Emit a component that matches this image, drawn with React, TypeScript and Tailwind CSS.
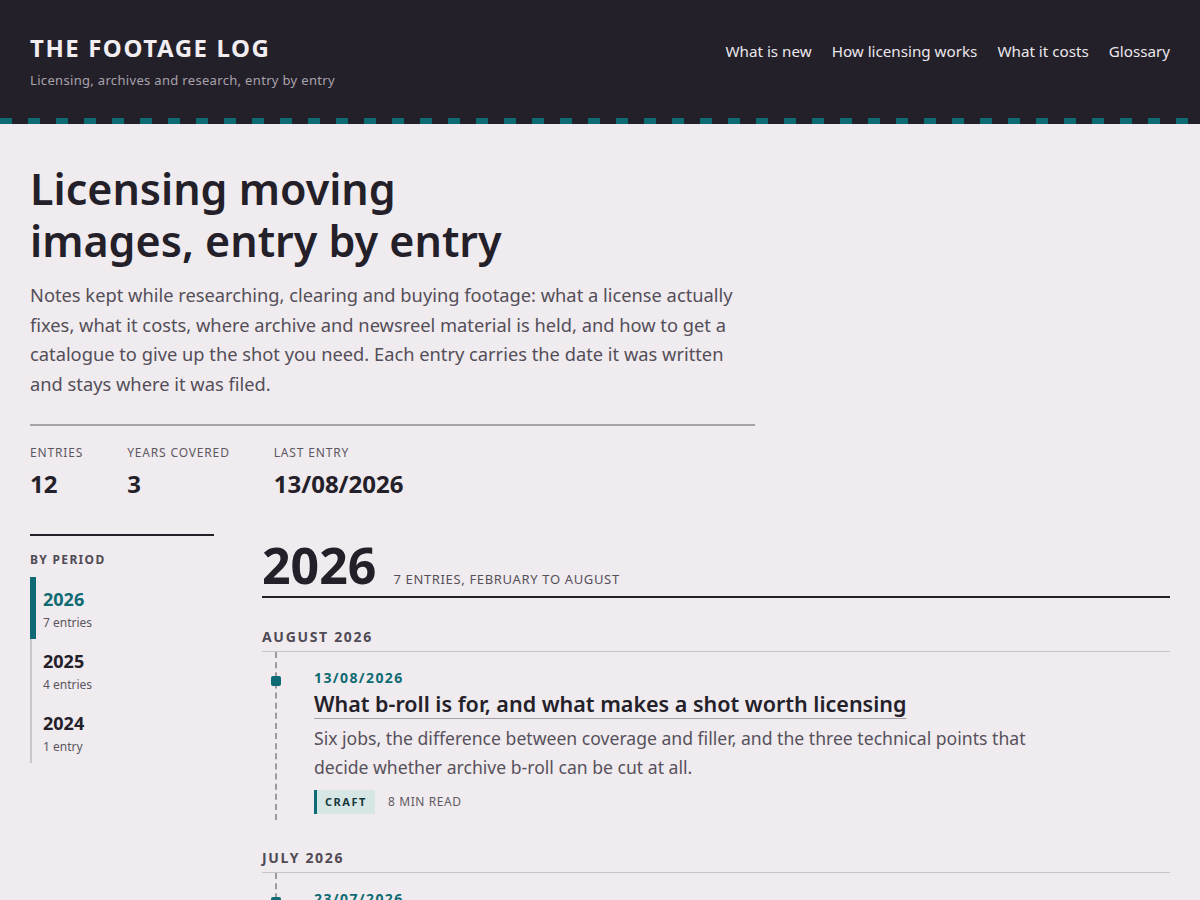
import React from "react";

const font = { fontFamily: '"Noto Sans", "Open Sans", sans-serif' };

const navLinks = ["What is new", "How licensing works", "What it costs", "Glossary"];

const stats = [
  { label: "Entries", value: "12" },
  { label: "Years covered", value: "3" },
  { label: "Last entry", value: "13/08/2026" },
];

const periods = [
  { year: "2026", count: "7 entries", active: true },
  { year: "2025", count: "4 entries", active: false },
  { year: "2024", count: "1 entry", active: false },
];

function Header() {
  return (
    <header className="bg-[#242029]">
      <div className="flex items-start justify-between px-[30px] pt-[32px] pb-[28px]">
        <div>
          <div className="text-[24px] leading-[32px] font-bold tracking-[0.065em] text-[#f1edf1]">
            THE FOOTAGE LOG
          </div>
          <div className="mt-[6px] text-[13px] leading-[20px] tracking-[0.025em] text-[#a8a2ac]">
            Licensing, archives and research, entry by entry
          </div>
        </div>
        <nav className="flex gap-[20px] pt-[8px] text-[15.2px] leading-[22px] text-[#ebe7ec]">
          {navLinks.map((l) => (
            <a key={l} href="#">
              {l}
            </a>
          ))}
        </nav>
      </div>
      <div className="h-[6px] bg-[repeating-linear-gradient(90deg,#0f6b73_0px,#0f6b73_12px,#242029_12px,#242029_28px)]" />
    </header>
  );
}

function Hero() {
  return (
    <section className="w-[725px]">
      <h1 className="max-w-[500px] text-[43px] leading-[52px] font-semibold text-[#242029]">
        Licensing moving images, entry by entry
      </h1>
      <p className="mt-[13px] text-[18.3px] leading-[29.5px] text-[#544e59]">
        Notes kept while researching, clearing and buying footage: what a license actually fixes,
        what it costs, where archive and newsreel material is held, and how to get a catalogue to
        give up the shot you need. Each entry carries the date it was written and stays where it
        was filed.
      </p>
      <div className="mt-[26px] h-[2px] bg-[#a7a2aa]" />
      <dl className="mt-[19px] flex gap-[44px]">
        {stats.map((s) => (
          <div key={s.label}>
            <dt className="text-[12px] leading-[16px] uppercase tracking-[0.07em] text-[#5d5862]">
              {s.label}
            </dt>
            <dd className="mt-[7px] text-[24px] leading-[32px] font-bold text-[#242029]">
              {s.value}
            </dd>
          </div>
        ))}
      </dl>
    </section>
  );
}

function Sidebar() {
  return (
    <aside className="w-[184px] shrink-0 border-t-2 border-[#242029] pt-[16px]">
      <div className="text-[12px] leading-[16px] font-bold uppercase tracking-[0.11em] text-[#4f4a55]">
        By period
      </div>
      <ul className="mt-[9px] border-l-2 border-[#c9c5cb]">
        {periods.map((p) =>
          p.active ? (
            <li
              key={p.year}
              className="-ml-[2px] h-[62px] border-l-[6px] border-[#0f6b73] pl-[7px] pt-[10px]"
            >
              <div className="text-[18px] leading-[24px] font-bold text-[#0f6b73]">{p.year}</div>
              <div className="mt-[4px] text-[12px] leading-[16px] text-[#5b5660]">{p.count}</div>
            </li>
          ) : (
            <li key={p.year} className="h-[62px] pl-[11px] pt-[10px]">
              <div className="text-[18px] leading-[24px] font-bold text-[#242029]">{p.year}</div>
              <div className="mt-[4px] text-[12px] leading-[16px] text-[#5b5660]">{p.count}</div>
            </li>
          )
        )}
      </ul>
    </aside>
  );
}

function MonthHeading({ children }: { children: React.ReactNode }) {
  return (
    <h3 className="border-b border-[#c6c2c8] pb-[4px] text-[14px] leading-[20px] font-bold uppercase tracking-[0.12em] text-[#4f4a55]">
      {children}
    </h3>
  );
}

function Entry({
  date,
  title,
  summary,
  tag,
  read,
}: {
  date: string;
  title: string;
  summary: string;
  tag: string;
  read: string;
}) {
  return (
    <article className="relative ml-[13px] border-l-2 border-dashed border-[#9d98a2] pl-[37px] pt-[16px] pb-[6px]">
      <span className="absolute left-[-6px] top-[24px] h-[10px] w-[10px] rounded-[2px] bg-[#0f6b73]" />
      <div className="text-[14px] leading-[20px] font-bold tracking-[0.1em] text-[#0f6b73]">
        {date}
      </div>
      <h4 className="mt-[1px] text-[21.5px] leading-[30px] font-semibold text-[#242029]">
        <a
          href="#"
          className="underline decoration-[#a29da6] decoration-1 underline-offset-[6px]"
        >
          {title}
        </a>
      </h4>
      <p className="mt-[5px] max-w-[740px] text-[17.6px] leading-[29px] text-[#57515c]">
        {summary}
      </p>
      <div className="mt-[8px] flex items-center gap-[13px]">
        <span className="border-l-[3px] border-[#0f6b73] bg-[#d6e6e5] pl-[8px] pr-[8px] text-[11px] leading-[24px] font-bold tracking-[0.14em] text-[#16383b]">
          {tag}
        </span>
        <span className="text-[12px] leading-[16px] uppercase tracking-[0.05em] text-[#5f5a64]">
          {read}
        </span>
      </div>
    </article>
  );
}

function Timeline() {
  return (
    <main className="min-w-0 flex-1 pt-[2px]">
      <div className="flex items-baseline gap-[17px] border-b-2 border-[#242029] pb-[2px]">
        <h2 className="text-[50px] leading-[58px] font-bold text-[#242029]">2026</h2>
        <span className="text-[13px] uppercase tracking-[0.05em] text-[#56505b]">
          7 entries, February to August
        </span>
      </div>

      <section className="mt-[29px]">
        <MonthHeading>August 2026</MonthHeading>
        <Entry
          date="13/08/2026"
          title="What b-roll is for, and what makes a shot worth licensing"
          summary="Six jobs, the difference between coverage and filler, and the three technical points that decide whether archive b-roll can be cut at all."
          tag="CRAFT"
          read="8 min read"
        />
      </section>

      <section className="mt-[28px]">
        <MonthHeading>July 2026</MonthHeading>
        <Entry
          date="23/07/2026"
          title="Reading a newsreel catalogue card before you order a viewing copy"
          summary="What the shelf mark, reel number and footage count tell you, and which fields are usually wrong."
          tag="ARCHIVES"
          read="6 min read"
        />
      </section>
    </main>
  );
}

export default function App() {
  return (
    <div className="min-h-[900px] bg-[#efebee]" style={font}>
      <Header />
      <div className="px-[30px] pt-[39px] pb-[60px]">
        <Hero />
        <div className="mt-[34px] flex gap-[48px]">
          <Sidebar />
          <Timeline />
        </div>
      </div>
    </div>
  );
}
